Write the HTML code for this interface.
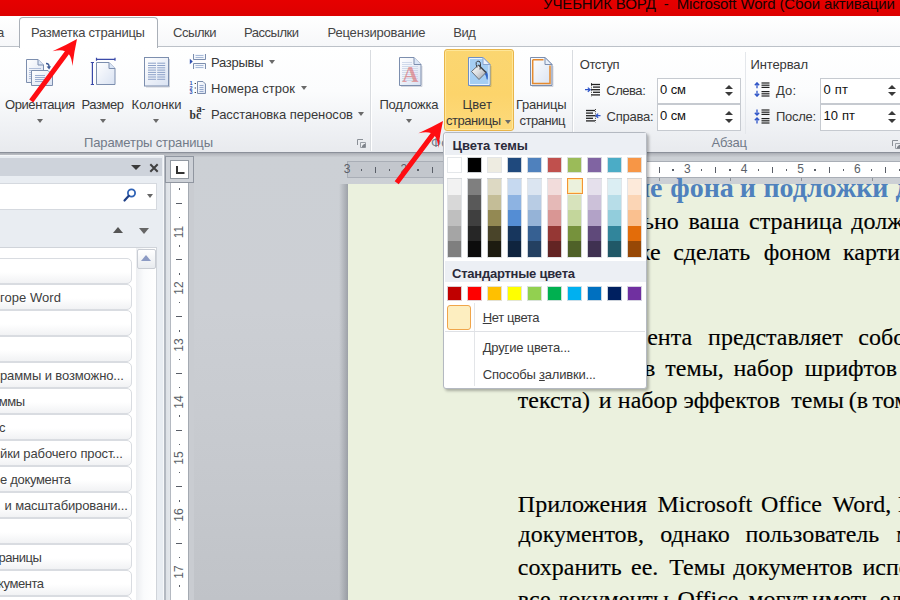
<!DOCTYPE html>
<html lang="ru"><head><meta charset="utf-8"><title>УЧЕБНИК ВОРД - Microsoft Word</title>
<style>
*{box-sizing:border-box;margin:0;padding:0}
html,body{width:900px;height:600px;overflow:hidden;background:#c7cbd0}
body{position:relative;font-family:"Liberation Sans",sans-serif;font-size:13px;color:#2b2b2b}
#app{position:absolute;left:0;top:0;width:900px;height:600px;overflow:hidden}
#app div,#app span,#app svg{position:absolute}
.t{white-space:nowrap}
#title{left:0;top:0;width:900px;height:16px;background:linear-gradient(#e60000,#dd0000)}
#tabs{left:0;top:16px;width:900px;height:31px;background:linear-gradient(#ffffff,#f6f7f9)}
#acttab{left:19px;top:17px;width:139px;height:31px;border:1px solid #aab0b8;border-bottom:none;border-radius:4px 4px 0 0;background:#fff}
#ribbon{left:0;top:46px;width:900px;height:107px;background:linear-gradient(#ffffff 0%,#fbfcfd 42%,#f0f2f5 74%,#e8eaee 100%);border-top:1px solid #bcc1c8;border-bottom:1px solid #8b909a}
.sep{top:50px;width:2px;height:101px;background:linear-gradient(90deg,#d9dce0 50%,#ffffff 50%)}
.dd{width:0;height:0;border-left:3.5px solid transparent;border-right:3.5px solid transparent;border-top:4px solid #6a6a6a}
.inp{background:#fff;border:1px solid #c6cad0}
#ws{left:0;top:153px;width:900px;height:447px;background:linear-gradient(#a9adb4 0,#bcbfc5 2px,#ccd0d5 4.5px,#cccfd4 35%,#c6c9ce 70%,#c0c3c8 100%)}
</style></head><body><div id="app">
<div id="title"></div><span class="t" style="top:-6.5px;font-size:15px;line-height:19px;height:19px;color:#160303;left:543.0px;letter-spacing:-0.13px;">УЧЕБНИК ВОРД&nbsp; -&nbsp; Microsoft Word (Сбой активации</span><div id="tabs"></div><div id="ribbon"></div><div id="acttab"></div><span class="t" style="top:24.5px;font-size:13px;line-height:16px;height:16px;color:#454545;left:-3.0px;letter-spacing:-0.23px;">а</span><span class="t" style="top:24.5px;font-size:13px;line-height:16px;height:16px;color:#454545;left:31.0px;letter-spacing:-0.25px;">Разметка страницы</span><span class="t" style="top:24.5px;font-size:13px;line-height:16px;height:16px;color:#454545;left:173.0px;letter-spacing:-0.45px;">Ссылки</span><span class="t" style="top:24.5px;font-size:13px;line-height:16px;height:16px;color:#454545;left:243.9px;letter-spacing:-0.45px;">Рассылки</span><span class="t" style="top:24.5px;font-size:13px;line-height:16px;height:16px;color:#454545;left:327.5px;letter-spacing:-0.18px;">Рецензирование</span><span class="t" style="top:24.5px;font-size:13px;line-height:16px;height:16px;color:#454545;left:453.2px;letter-spacing:-0.45px;">Вид</span><div class="sep" style="left:370px"></div><div class="sep" style="left:571.5px"></div><span class="t" style="top:97.0px;font-size:13px;line-height:16px;height:16px;color:#383838;left:5.0px;letter-spacing:-0.42px;">Ориентация</span><span class="t" style="top:97.0px;font-size:13px;line-height:16px;height:16px;color:#383838;left:81.5px;letter-spacing:-0.44px;">Размер</span><span class="t" style="top:97.0px;font-size:13px;line-height:16px;height:16px;color:#383838;left:131.5px;letter-spacing:0.07px;">Колонки</span><div class="dd" style="left:36.5px;top:119px"></div><div class="dd" style="left:99.5px;top:119px"></div><div class="dd" style="left:152.5px;top:119px"></div><span class="t" style="top:55.0px;font-size:13px;line-height:16px;height:16px;color:#383838;left:211.0px;letter-spacing:-0.27px;">Разрывы</span><span class="t" style="top:81.0px;font-size:13px;line-height:16px;height:16px;color:#383838;left:211.0px;letter-spacing:0.05px;">Номера строк</span><span class="t" style="top:107.0px;font-size:13px;line-height:16px;height:16px;color:#383838;left:211.0px;letter-spacing:-0.08px;">Расстановка переносов</span><div class="dd" style="left:268.5px;top:60px"></div><div class="dd" style="left:300.5px;top:86px"></div><div class="dd" style="left:357.5px;top:112px"></div><span class="t" style="top:97.0px;font-size:13px;line-height:16px;height:16px;color:#383838;left:379.5px;letter-spacing:-0.23px;">Подложка</span><div class="dd" style="left:405.5px;top:119px"></div><span class="t" style="top:135.0px;font-size:13px;line-height:16px;height:16px;color:#717a88;left:84.0px;letter-spacing:-0.12px;">Параметры страницы</span><span class="t" style="top:135.0px;font-size:13px;line-height:16px;height:16px;color:#717a88;left:431.1px;letter-spacing:0.25px;">Фон страницы</span><span class="t" style="top:135.0px;font-size:13px;line-height:16px;height:16px;color:#717a88;left:711.5px;letter-spacing:-0.24px;">Абзац</span><div style="left:444px;top:49px;width:70px;height:82px;border:1px solid #e8b54a;border-radius:3px;background:linear-gradient(#fbd671 0%,#fcd46b 55%,#fdda7c 100%);box-shadow:inset 0 0 0 1px rgba(255,236,170,.7)"></div><span class="t" style="top:97.0px;font-size:13px;line-height:16px;height:16px;color:#383838;left:462.5px;letter-spacing:0.12px;">Цвет</span><span class="t" style="top:113.0px;font-size:13px;line-height:16px;height:16px;color:#383838;left:446.0px;letter-spacing:-0.45px;">страницы</span><div class="dd" style="left:504.5px;top:120px"></div><span class="t" style="top:97.0px;font-size:13px;line-height:16px;height:16px;color:#383838;left:516.0px;letter-spacing:-0.25px;">Границы</span><span class="t" style="top:113.0px;font-size:13px;line-height:16px;height:16px;color:#383838;left:519.4px;letter-spacing:-0.45px;">страниц</span><span class="t" style="top:57.0px;font-size:13px;line-height:16px;height:16px;color:#383838;left:579.8px;letter-spacing:-0.45px;">Отступ</span><span class="t" style="top:83.0px;font-size:13px;line-height:16px;height:16px;color:#383838;left:606.2px;letter-spacing:-0.45px;">Слева:</span><span class="t" style="top:109.0px;font-size:13px;line-height:16px;height:16px;color:#383838;left:606.5px;letter-spacing:-0.25px;">Справа:</span><div class="inp" style="left:657px;top:77.5px;width:83.5px;height:26.5px"></div><div class="inp" style="left:657px;top:104px;width:83.5px;height:26.5px"></div><span class="t" style="top:82.0px;font-size:13px;line-height:16px;height:16px;color:#111;left:660.0px;letter-spacing:-0.09px;">0 см</span><span class="t" style="top:108.0px;font-size:13px;line-height:16px;height:16px;color:#111;left:660.0px;letter-spacing:-0.09px;">0 см</span><span class="t" style="top:57.0px;font-size:13px;line-height:16px;height:16px;color:#383838;left:750.5px;letter-spacing:-0.12px;">Интервал</span><span class="t" style="top:83.0px;font-size:13px;line-height:16px;height:16px;color:#383838;left:776.0px;letter-spacing:0.10px;">До:</span><span class="t" style="top:109.0px;font-size:13px;line-height:16px;height:16px;color:#383838;left:776.0px;letter-spacing:-0.30px;">После:</span><div class="inp" style="left:820px;top:77.5px;width:84px;height:26.5px"></div><div class="inp" style="left:820px;top:104px;width:84px;height:26.5px"></div><span class="t" style="top:82.0px;font-size:13px;line-height:16px;height:16px;color:#111;left:823.5px;letter-spacing:0.22px;">0 пт</span><span class="t" style="top:108.0px;font-size:13px;line-height:16px;height:16px;color:#111;left:823.5px;letter-spacing:0.11px;">10 пт</span><svg style="left:0px;top:0px" width="1" height="1" viewBox="0 0 1 1"><defs><linearGradient id="pg" x1="0" y1="0" x2="1" y2="1"><stop offset="0" stop-color="#ffffff"/><stop offset="1" stop-color="#d9e2f2"/></linearGradient><linearGradient id="bk" x1="0" y1="0" x2="1" y2="1"><stop offset="0" stop-color="#ffffff"/><stop offset=".5" stop-color="#d9dbde"/><stop offset="1" stop-color="#979ba1"/></linearGradient></defs></svg><svg style="left:24px;top:56px" width="32" height="32" viewBox="0 0 32 32"><path d="M2.5 3.5H14L19.5 9V26.5H2.5Z" fill="url(#pg)" stroke="#7c8eae"/><path d="M14 3.5V9H19.5" fill="#dbe6f7" stroke="#7c8eae"/><path d="M5 12.5H17M5 14.5H8M5 16.5H8M5 18.5H8M5 20.5H8M5 22.5H8" stroke="#a9b9d6" stroke-width=".9"/><path d="M7.5 14.5H24L28.5 19V29.5H7.5Z" fill="url(#pg)" stroke="#7c8eae"/><path d="M11 19.5H21M11 21.5H21M11 23.5H21M11 25.5H21" stroke="#91a5c9" stroke-width=".9"/><path d="M22 7.5Q25.5 7.5 25 11.5" fill="none" stroke="#3d5a94" stroke-width="1.4"/><path d="M22.6 10.6L25.2 13.6L27 10.2Z" fill="#3d5a94"/></svg><svg style="left:89px;top:56px" width="30" height="32" viewBox="0 0 30 32"><path d="M7.5 6.5H20L26 12.5V28.5H7.5Z" fill="url(#pg)" stroke="#7c8eae"/><path d="M20 6.5V12.5H26" fill="#dbe6f7" stroke="#7c8eae"/><path d="M3.4 6.5V28.5M1.8 6.5H5M1.8 28.5H5M7.5 3.3H26M7.5 1.8V4.8M26 1.8V4.8" fill="none" stroke="#3a49a8" stroke-width="1.2"/></svg><svg style="left:142px;top:55px" width="30" height="34" viewBox="0 0 30 34"><rect x="2.5" y="2.5" width="24" height="28.5" fill="url(#pg)" stroke="#7c8eae"/><path d="M27.5 4V32H4" fill="none" stroke="rgba(120,130,150,.35)"/><path d="M6 8.2H14M15.2 8.2H23.2" stroke="#8ca1c8" stroke-width="1"/><path d="M6 10.5H14M15.2 10.5H23.2" stroke="#8ca1c8" stroke-width="1"/><path d="M6 12.8H14M15.2 12.8H23.2" stroke="#8ca1c8" stroke-width="1"/><path d="M6 15.1H14M15.2 15.1H23.2" stroke="#8ca1c8" stroke-width="1"/><path d="M6 17.4H14M15.2 17.4H23.2" stroke="#8ca1c8" stroke-width="1"/><path d="M6 19.7H14M15.2 19.7H23.2" stroke="#8ca1c8" stroke-width="1"/><path d="M6 22.0H14M15.2 22.0H23.2" stroke="#8ca1c8" stroke-width="1"/><path d="M6 24.3H14M15.2 24.3H23.2" stroke="#8ca1c8" stroke-width="1"/></svg><svg style="left:188px;top:52px" width="20" height="20" viewBox="0 0 20 20"><path d="M5.5 2V7.5H17.5V2" fill="#f4f7fc" stroke="#7c8eae"/><path d="M7.5 3.5H15.5M7.5 5.5H15.5" stroke="#9fb2d4" stroke-width=".9"/><path d="M5.5 17V11.5H17.5V17" fill="#f4f7fc" stroke="#7c8eae"/><path d="M7.5 13.5H15.5M7.5 15.5H15.5" stroke="#9fb2d4" stroke-width=".9"/><path d="M1.8 6.8L4.8 9.5L1.8 12.2Z" fill="#2f4fb0"/></svg><svg style="left:188px;top:79px" width="20" height="18" viewBox="0 0 20 18"><path d="M9.5 2.5H15L17.5 5V14.5H9.5Z" fill="url(#pg)" stroke="#7c8eae"/><path d="M11.5 6.5H15.5M11.5 8.5H15.5M11.5 10.5H15.5M11.5 12.5H15.5" stroke="#8ca1c8" stroke-width=".9"/><path d="M7.3 4V5M7.3 8.5V9.5M7.3 13V14" stroke="#333" stroke-width="1.2"/><text x="1.5" y="6.2" font-family="Liberation Sans,sans-serif" font-size="5.5" font-weight="bold" fill="#2f4fb0">1</text><text x="1.5" y="10.8" font-family="Liberation Sans,sans-serif" font-size="5.5" font-weight="bold" fill="#2f4fb0">2</text><text x="1.5" y="15.4" font-family="Liberation Sans,sans-serif" font-size="5.5" font-weight="bold" fill="#2f4fb0">3</text></svg><span class="t" style="left:189.5px;top:109px;font:bold 11.5px/12px 'Liberation Serif',serif;color:#333">bc</span><span class="t" style="left:196.5px;top:103px;font:bold 10.5px/12px 'Liberation Serif',serif;color:#333">a-</span><svg style="left:397px;top:54px" width="28" height="36" viewBox="0 0 28 36"><path d="M2.5 3.5H17L24 10.5V31.5H2.5Z" fill="url(#pg)" stroke="#7c8eae"/><path d="M17 3.5V10.5H24" fill="#dbe6f7" stroke="#7c8eae"/><path d="M25 12V32.5H4" fill="none" stroke="rgba(120,130,150,.3)"/><path d="M5 8.5H15M5 10.5H15M5 12.5H21M5 14.5H21M5 16.5H21M5 18.5H21M5 20.5H21M5 22.5H21M5 24.5H21M5 26.5H21" stroke="#c7d2e6" stroke-width=".8"/><text x="13.3" y="27.5" text-anchor="middle" font-family="Liberation Serif,serif" font-size="23" font-weight="bold" fill="rgba(222,100,100,.58)">A</text></svg><svg style="left:466px;top:54px" width="28" height="36" viewBox="0 0 28 36"><path d="M2.5 3.5H17L24 10.5V31.5H2.5Z" fill="#a5cef3" stroke="#6d8fc4"/><path d="M3.5 4.5H16.6L23 10.9V30.5H3.5Z" fill="none" stroke="#e9f3fd"/><path d="M17 3.5V10.5H24Z" fill="#e9f0fb" stroke="#8aa3cc"/><path d="M25 12V32.5H4" fill="none" stroke="rgba(120,110,60,.3)"/><path d="M18.5 16.5Q22.5 17.5 21.8 24Q21.5 27 20.6 25Q20 20 17 18.5Z" fill="#2f63c4"/><path d="M5.5 17.5L12.5 11L20 18.5L13 25.5Z" fill="url(#bk)" stroke="#5d6269" stroke-width=".9"/><path d="M12.5 11L20 18.5" stroke="#43474d" stroke-width="1.4"/><path d="M11 13.5Q8.5 6.5 13 7.2Q15.5 8 14 15.5" fill="none" stroke="#3b3f45" stroke-width="1"/></svg><svg style="left:528px;top:54px" width="28" height="36" viewBox="0 0 28 36"><path d="M2.5 3.5H17L24 10.5V31.5H2.5Z" fill="url(#pg)" stroke="#7c8eae"/><path d="M25 12V32.5H4" fill="none" stroke="rgba(120,130,150,.3)"/><path d="M4.7 5.7H15.5M22 11.5V29.5H4.7V5.7" fill="none" stroke="#e58a2e" stroke-width="1.5"/><path d="M17 3.5V10.5H24Z" fill="#e9f0fb" stroke="#7c8eae"/></svg><div style="left:724.6px;top:84.5px;width:0;height:0;border-left:4px solid transparent;border-right:4px solid transparent;border-bottom:4.5px solid #3a3a3a"></div><div style="left:724.6px;top:92.0px;width:0;height:0;border-left:4px solid transparent;border-right:4px solid transparent;border-top:4.5px solid #3a3a3a"></div><div style="left:724.6px;top:111px;width:0;height:0;border-left:4px solid transparent;border-right:4px solid transparent;border-bottom:4.5px solid #3a3a3a"></div><div style="left:724.6px;top:118.5px;width:0;height:0;border-left:4px solid transparent;border-right:4px solid transparent;border-top:4.5px solid #3a3a3a"></div><div style="left:887.6px;top:84.5px;width:0;height:0;border-left:4px solid transparent;border-right:4px solid transparent;border-bottom:4.5px solid #3a3a3a"></div><div style="left:887.6px;top:92.0px;width:0;height:0;border-left:4px solid transparent;border-right:4px solid transparent;border-top:4.5px solid #3a3a3a"></div><div style="left:887.6px;top:111px;width:0;height:0;border-left:4px solid transparent;border-right:4px solid transparent;border-bottom:4.5px solid #3a3a3a"></div><div style="left:887.6px;top:118.5px;width:0;height:0;border-left:4px solid transparent;border-right:4px solid transparent;border-top:4.5px solid #3a3a3a"></div><svg style="left:585px;top:83px" width="16" height="14" viewBox="0 0 16 14"><path d="M6 1.5H15" stroke="#222" stroke-width="1.3"/><path d="M8 4.1H15" stroke="#222" stroke-width="1.3"/><path d="M6 6.7H15" stroke="#222" stroke-width="1.3"/><path d="M8 9.3H15" stroke="#222" stroke-width="1.3"/><path d="M6 11.9H15" stroke="#222" stroke-width="1.3"/><path d="M0 6.7H4.5M2.8 4.6L5.2 6.7L2.8 8.8" fill="none" stroke="#2f55c8" stroke-width="1.2"/><path d="M6.5 0V13.5" stroke="#444" stroke-width="1" stroke-dasharray="1 1.2"/></svg><svg style="left:585px;top:109px" width="16" height="14" viewBox="0 0 16 14"><path d="M1 1.5H10" stroke="#222" stroke-width="1.3"/><path d="M1 4.1H8" stroke="#222" stroke-width="1.3"/><path d="M1 6.7H10" stroke="#222" stroke-width="1.3"/><path d="M1 9.3H8" stroke="#222" stroke-width="1.3"/><path d="M1 11.9H10" stroke="#222" stroke-width="1.3"/><path d="M15.5 6.7H11.5M13.2 4.6L10.8 6.7L13.2 8.8" fill="none" stroke="#2f55c8" stroke-width="1.2"/><path d="M10.5 0V13.5" stroke="#444" stroke-width="1" stroke-dasharray="1 1.2"/></svg><svg style="left:753.5px;top:82px" width="16" height="15" viewBox="0 0 16 15"><path d="M7.5 1H15.5" stroke="#222" stroke-width="1.2"/><path d="M7.5 3.2H15.5" stroke="#222" stroke-width="1.2"/><path d="M7.5 5.4H15.5" stroke="#222" stroke-width="1.2"/><path d="M7.5 9.6H15.5" stroke="#222" stroke-width="1.2"/><path d="M7.5 11.8H15.5" stroke="#222" stroke-width="1.2"/><path d="M7.5 14H15.5" stroke="#222" stroke-width="1.2"/><path d="M3 1V6.2M0.8 3.2L3 0.8L5.2 3.2M3 8.8V14M0.8 11.8L3 14.2L5.2 11.8" fill="none" stroke="#2f55c8" stroke-width="1.3"/></svg><svg style="left:753.5px;top:108.5px" width="16" height="15" viewBox="0 0 16 15"><path d="M7.5 1H15.5" stroke="#222" stroke-width="1.2"/><path d="M7.5 3.2H15.5" stroke="#222" stroke-width="1.2"/><path d="M7.5 5.4H15.5" stroke="#222" stroke-width="1.2"/><path d="M7.5 9.6H15.5" stroke="#222" stroke-width="1.2"/><path d="M7.5 11.8H15.5" stroke="#222" stroke-width="1.2"/><path d="M7.5 14H15.5" stroke="#222" stroke-width="1.2"/><path d="M3 0.5V5.7M0.8 3.7L3 6.1L5.2 3.7M3 9.3V14.5M0.8 11.3L3 8.9L5.2 11.3" fill="none" stroke="#2f55c8" stroke-width="1.3"/></svg><div style="left:744.5px;top:52px;width:1px;height:82px;background:#e4e7eb"></div><svg style="left:356.5px;top:138.5px" width="9" height="9" viewBox="0 0 9 9"><path d="M0.5 6V0.5H6" fill="none" stroke="#8b9097" stroke-width="1"/><path d="M3.5 3.5H8.5V8.5H3.5Z" fill="none" stroke="#9a9fa6" stroke-width="1"/><path d="M8.5 8.5H5V7L7 5H8.5Z" fill="#7d8289"/></svg><svg style="left:892px;top:139.5px" width="9" height="9" viewBox="0 0 9 9"><path d="M0.5 6V0.5H6" fill="none" stroke="#8b9097" stroke-width="1"/><path d="M3.5 3.5H8.5V8.5H3.5Z" fill="none" stroke="#9a9fa6" stroke-width="1"/><path d="M8.5 8.5H5V7L7 5H8.5Z" fill="#7d8289"/></svg><div id="ws"></div><div style="left:0;top:155px;width:164px;height:445px;background:#e9edf2;border-top:1px solid #f4f6f8;border-right:1px solid #f7f8fa"></div><div style="left:164px;top:155px;width:2px;height:445px;background:#b4b9c1"></div><div style="left:0;top:158px;width:162px;height:18px;background:#ced3db"></div><div style="left:130.5px;top:165px;border-left:5px solid transparent;border-right:5px solid transparent;border-top:5px solid #3a3a3a;width:0;height:0"></div><svg style="left:148.5px;top:162.5px" width="10" height="10" viewBox="0 0 10 10"><path d="M1.3 1.3L8.7 8.7M8.7 1.3L1.3 8.7" stroke="#404040" stroke-width="2" fill="none"/></svg><div style="left:-2px;top:183px;width:159px;height:27px;background:#fff;border:1px solid #d5d9df"></div><svg style="left:122px;top:187px" width="16" height="16" viewBox="0 0 16 16"><circle cx="9.5" cy="6" r="3.6" fill="#fff" stroke="#2f62b5" stroke-width="1.8"/><path d="M6.8 8.8L2.5 13.5" stroke="#1f3f86" stroke-width="2.2" stroke-linecap="round"/></svg><div class="dd" style="left:146.5px;top:194px;border-top-color:#666"></div><div style="left:112.5px;top:227px;border-left:5px solid transparent;border-right:5px solid transparent;border-bottom:6px solid #555;width:0;height:0"></div><div style="left:138.5px;top:228px;border-left:5px solid transparent;border-right:5px solid transparent;border-top:6px solid #666;width:0;height:0"></div><div style="left:-2px;top:247px;width:159px;height:360px;background:#fff;border:1px solid #d0d4da"></div><div style="left:136px;top:248px;width:20px;height:352px;background:linear-gradient(90deg,#eceef1,#fafbfc 40%,#ffffff)"></div><div style="left:136.5px;top:248.5px;width:19px;height:20px;border:1px solid #c9cdd4;border-radius:2px;background:linear-gradient(#ffffff,#e8ebef)"></div><div style="left:140.5px;top:254.5px;border-left:5.5px solid transparent;border-right:5.5px solid transparent;border-bottom:6px solid #8c9bc4;width:0;height:0"></div><div style="left:-6px;top:257.7px;width:138px;height:26px;border:1px solid #d9dce1;border-radius:5px;background:linear-gradient(#ffffff 55%,#f1f2f4)"></div><div style="left:-6px;top:283.7px;width:138px;height:26px;border:1px solid #d9dce1;border-radius:5px;background:linear-gradient(#ffffff 55%,#f1f2f4)"></div><span class="t" style="top:290.3px;font-size:13px;line-height:16px;height:16px;color:#404040;left:0.0px;letter-spacing:0.05px;">горе Word</span><div style="left:-6px;top:309.7px;width:138px;height:26px;border:1px solid #d9dce1;border-radius:5px;background:linear-gradient(#ffffff 55%,#f1f2f4)"></div><div style="left:-6px;top:335.7px;width:138px;height:26px;border:1px solid #d9dce1;border-radius:5px;background:linear-gradient(#ffffff 55%,#f1f2f4)"></div><div style="left:-6px;top:361.7px;width:138px;height:26px;border:1px solid #d9dce1;border-radius:5px;background:linear-gradient(#ffffff 55%,#f1f2f4)"></div><span class="t" style="top:368.3px;font-size:13px;line-height:16px;height:16px;color:#404040;left:0.0px;letter-spacing:-0.11px;">раммы и возможно...</span><div style="left:-6px;top:387.7px;width:138px;height:26px;border:1px solid #d9dce1;border-radius:5px;background:linear-gradient(#ffffff 55%,#f1f2f4)"></div><span class="t" style="top:394.3px;font-size:13px;line-height:16px;height:16px;color:#404040;left:-1.3px;letter-spacing:-0.45px;">ммы</span><div style="left:-6px;top:413.7px;width:138px;height:26px;border:1px solid #d9dce1;border-radius:5px;background:linear-gradient(#ffffff 55%,#f1f2f4)"></div><span class="t" style="top:420.3px;font-size:13px;line-height:16px;height:16px;color:#404040;left:-1.0px;letter-spacing:-0.45px;">с</span><div style="left:-6px;top:439.7px;width:138px;height:26px;border:1px solid #d9dce1;border-radius:5px;background:linear-gradient(#ffffff 55%,#f1f2f4)"></div><span class="t" style="top:446.3px;font-size:13px;line-height:16px;height:16px;color:#404040;left:0.0px;letter-spacing:-0.12px;">йки рабочего прост...</span><div style="left:-6px;top:465.7px;width:138px;height:26px;border:1px solid #d9dce1;border-radius:5px;background:linear-gradient(#ffffff 55%,#f1f2f4)"></div><span class="t" style="top:472.3px;font-size:13px;line-height:16px;height:16px;color:#404040;left:0.0px;letter-spacing:-0.32px;">е документа</span><div style="left:-6px;top:491.7px;width:138px;height:26px;border:1px solid #d9dce1;border-radius:5px;background:linear-gradient(#ffffff 55%,#f1f2f4)"></div><span class="t" style="top:498.3px;font-size:13px;line-height:16px;height:16px;color:#404040;left:4.5px;letter-spacing:-0.11px;">и масштабировани...</span><div style="left:-6px;top:517.7px;width:138px;height:26px;border:1px solid #d9dce1;border-radius:5px;background:linear-gradient(#ffffff 55%,#f1f2f4)"></div><div style="left:-6px;top:543.7px;width:138px;height:26px;border:1px solid #d9dce1;border-radius:5px;background:linear-gradient(#ffffff 55%,#f1f2f4)"></div><span class="t" style="top:550.3px;font-size:13px;line-height:16px;height:16px;color:#404040;left:-1.5px;letter-spacing:-0.45px;">раницы</span><div style="left:-6px;top:569.7px;width:138px;height:26px;border:1px solid #d9dce1;border-radius:5px;background:linear-gradient(#ffffff 55%,#f1f2f4)"></div><span class="t" style="top:576.3px;font-size:13px;line-height:16px;height:16px;color:#404040;left:-1.9px;letter-spacing:-0.45px;">кумента</span><div style="left:-6px;top:595.7px;width:138px;height:26px;border:1px solid #d9dce1;border-radius:5px;background:linear-gradient(#ffffff 55%,#f1f2f4)"></div><div style="left:166px;top:183px;width:28px;height:420px;background:linear-gradient(90deg,#dde1e6 0,#e4e7eb 4px,#b4b9c1 4px,#b4b9c1 5px,#ffffff 5px,#ffffff 22.5px,#a4aab2 22.5px,#a4aab2 23.5px,#c9ccd1 23.5px)"></div><div style="left:165px;top:156px;width:29px;height:27px;border:1px solid #9096a0;background:#cdd1d7"></div><div style="left:170px;top:160px;width:19px;height:19px;border:1px solid #9299a2;background:#fff"></div><svg style="left:175.5px;top:166px" width="10" height="10" viewBox="0 0 10 10"><path d="M1 0V7H8.5" stroke="#333" stroke-width="2" fill="none"/></svg><div style="left:178.5px;top:188.4px;width:1.6px;height:1.6px;background:#5a5f68"></div><div style="left:176px;top:202.7px;width:6px;height:1px;background:#5a5f68"></div><div style="left:178.5px;top:216.7px;width:1.6px;height:1.6px;background:#5a5f68"></div><span class="t" style="left:171px;top:223.6px;width:16px;height:16px;line-height:16px;font-size:12px;color:#5a5f68;transform:rotate(-90deg);text-align:center">11</span><div style="left:178.5px;top:245.1px;width:1.6px;height:1.6px;background:#5a5f68"></div><div style="left:176px;top:259.4px;width:6px;height:1px;background:#5a5f68"></div><div style="left:178.5px;top:273.4px;width:1.6px;height:1.6px;background:#5a5f68"></div><span class="t" style="left:171px;top:280.3px;width:16px;height:16px;line-height:16px;font-size:12px;color:#5a5f68;transform:rotate(-90deg);text-align:center">12</span><div style="left:178.5px;top:301.8px;width:1.6px;height:1.6px;background:#5a5f68"></div><div style="left:176px;top:316.2px;width:6px;height:1px;background:#5a5f68"></div><div style="left:178.5px;top:330.1px;width:1.6px;height:1.6px;background:#5a5f68"></div><span class="t" style="left:171px;top:337.0px;width:16px;height:16px;line-height:16px;font-size:12px;color:#5a5f68;transform:rotate(-90deg);text-align:center">13</span><div style="left:178.5px;top:358.5px;width:1.6px;height:1.6px;background:#5a5f68"></div><div style="left:176px;top:372.9px;width:6px;height:1px;background:#5a5f68"></div><div style="left:178.5px;top:386.8px;width:1.6px;height:1.6px;background:#5a5f68"></div><span class="t" style="left:171px;top:393.7px;width:16px;height:16px;line-height:16px;font-size:12px;color:#5a5f68;transform:rotate(-90deg);text-align:center">14</span><div style="left:178.5px;top:415.2px;width:1.6px;height:1.6px;background:#5a5f68"></div><div style="left:176px;top:429.6px;width:6px;height:1px;background:#5a5f68"></div><div style="left:178.5px;top:443.5px;width:1.6px;height:1.6px;background:#5a5f68"></div><span class="t" style="left:171px;top:450.4px;width:16px;height:16px;line-height:16px;font-size:12px;color:#5a5f68;transform:rotate(-90deg);text-align:center">15</span><div style="left:178.5px;top:471.9px;width:1.6px;height:1.6px;background:#5a5f68"></div><div style="left:176px;top:486.2px;width:6px;height:1px;background:#5a5f68"></div><div style="left:178.5px;top:500.2px;width:1.6px;height:1.6px;background:#5a5f68"></div><span class="t" style="left:171px;top:507.1px;width:16px;height:16px;line-height:16px;font-size:12px;color:#5a5f68;transform:rotate(-90deg);text-align:center">16</span><div style="left:178.5px;top:528.6px;width:1.6px;height:1.6px;background:#5a5f68"></div><div style="left:176px;top:543.0px;width:6px;height:1px;background:#5a5f68"></div><div style="left:178.5px;top:556.9px;width:1.6px;height:1.6px;background:#5a5f68"></div><span class="t" style="left:171px;top:563.8px;width:16px;height:16px;line-height:16px;font-size:12px;color:#5a5f68;transform:rotate(-90deg);text-align:center">17</span><div style="left:178.5px;top:585.3px;width:1.6px;height:1.6px;background:#5a5f68"></div><div style="left:347px;top:161px;width:560px;height:17px;background:linear-gradient(90deg,#c3c7cd 0,#c3c7cd 170px,#ffffff 170px);border:1px solid #a9aeb6"></div><span class="t" style="left:339.1px;top:161px;width:16px;text-align:center;font-size:12px;line-height:17px;height:17px;color:#5a5f68">3</span><div style="left:360.6px;top:169px;width:1.6px;height:1.6px;background:#5a5f68"></div><div style="left:375.0px;top:166.5px;width:1px;height:6px;background:#5a5f68"></div><div style="left:388.9px;top:169px;width:1.6px;height:1.6px;background:#5a5f68"></div><span class="t" style="left:395.8px;top:161px;width:16px;text-align:center;font-size:12px;line-height:17px;height:17px;color:#5a5f68">2</span><div style="left:417.3px;top:169px;width:1.6px;height:1.6px;background:#5a5f68"></div><div style="left:431.7px;top:166.5px;width:1px;height:6px;background:#5a5f68"></div><div style="left:445.6px;top:169px;width:1.6px;height:1.6px;background:#5a5f68"></div><span class="t" style="left:452.5px;top:161px;width:16px;text-align:center;font-size:12px;line-height:17px;height:17px;color:#5a5f68">1</span><div style="left:474.0px;top:169px;width:1.6px;height:1.6px;background:#5a5f68"></div><div style="left:488.4px;top:166.5px;width:1px;height:6px;background:#5a5f68"></div><div style="left:502.3px;top:169px;width:1.6px;height:1.6px;background:#5a5f68"></div><div style="left:530.7px;top:169px;width:1.6px;height:1.6px;background:#5a5f68"></div><div style="left:545.1px;top:166.5px;width:1px;height:6px;background:#5a5f68"></div><div style="left:559.0px;top:169px;width:1.6px;height:1.6px;background:#5a5f68"></div><span class="t" style="left:565.9px;top:161px;width:16px;text-align:center;font-size:12px;line-height:17px;height:17px;color:#5a5f68">1</span><div style="left:587.4px;top:169px;width:1.6px;height:1.6px;background:#5a5f68"></div><div style="left:601.8px;top:166.5px;width:1px;height:6px;background:#5a5f68"></div><div style="left:615.7px;top:169px;width:1.6px;height:1.6px;background:#5a5f68"></div><span class="t" style="left:622.6px;top:161px;width:16px;text-align:center;font-size:12px;line-height:17px;height:17px;color:#5a5f68">2</span><div style="left:644.1px;top:169px;width:1.6px;height:1.6px;background:#5a5f68"></div><div style="left:658.5px;top:166.5px;width:1px;height:6px;background:#5a5f68"></div><div style="left:672.4px;top:169px;width:1.6px;height:1.6px;background:#5a5f68"></div><span class="t" style="left:679.3px;top:161px;width:16px;text-align:center;font-size:12px;line-height:17px;height:17px;color:#5a5f68">3</span><div style="left:700.8px;top:169px;width:1.6px;height:1.6px;background:#5a5f68"></div><div style="left:715.2px;top:166.5px;width:1px;height:6px;background:#5a5f68"></div><div style="left:729.1px;top:169px;width:1.6px;height:1.6px;background:#5a5f68"></div><span class="t" style="left:736.0px;top:161px;width:16px;text-align:center;font-size:12px;line-height:17px;height:17px;color:#5a5f68">4</span><div style="left:757.5px;top:169px;width:1.6px;height:1.6px;background:#5a5f68"></div><div style="left:771.9px;top:166.5px;width:1px;height:6px;background:#5a5f68"></div><div style="left:785.8px;top:169px;width:1.6px;height:1.6px;background:#5a5f68"></div><span class="t" style="left:792.7px;top:161px;width:16px;text-align:center;font-size:12px;line-height:17px;height:17px;color:#5a5f68">5</span><div style="left:814.2px;top:169px;width:1.6px;height:1.6px;background:#5a5f68"></div><div style="left:828.6px;top:166.5px;width:1px;height:6px;background:#5a5f68"></div><div style="left:842.5px;top:169px;width:1.6px;height:1.6px;background:#5a5f68"></div><span class="t" style="left:849.4px;top:161px;width:16px;text-align:center;font-size:12px;line-height:17px;height:17px;color:#5a5f68">6</span><div style="left:870.9px;top:169px;width:1.6px;height:1.6px;background:#5a5f68"></div><div style="left:885.3px;top:166.5px;width:1px;height:6px;background:#5a5f68"></div><div style="left:899.2px;top:169px;width:1.6px;height:1.6px;background:#5a5f68"></div><span class="t" style="left:906.1px;top:161px;width:16px;text-align:center;font-size:12px;line-height:17px;height:17px;color:#5a5f68">7</span><div style="left:927.6px;top:169px;width:1.6px;height:1.6px;background:#5a5f68"></div><div style="left:942.0px;top:166.5px;width:1px;height:6px;background:#5a5f68"></div><div style="left:955.9px;top:169px;width:1.6px;height:1.6px;background:#5a5f68"></div><div style="left:517.2px;top:178px;width:1px;height:3px;background:#8d939b"></div><div style="left:588.1px;top:178px;width:1px;height:3px;background:#8d939b"></div><div style="left:659.0px;top:178px;width:1px;height:3px;background:#8d939b"></div><div style="left:729.8px;top:178px;width:1px;height:3px;background:#8d939b"></div><div style="left:800.7px;top:178px;width:1px;height:3px;background:#8d939b"></div><div style="left:871.6px;top:178px;width:1px;height:3px;background:#8d939b"></div><div style="left:942.5px;top:178px;width:1px;height:3px;background:#8d939b"></div><div style="left:1013.3px;top:178px;width:1px;height:3px;background:#8d939b"></div><div style="left:339px;top:184px;width:9px;height:420px;background:linear-gradient(90deg,rgba(120,125,133,0) 0,rgba(120,125,133,.55) 100%)"></div><div style="left:347.5px;top:184px;width:560px;height:420px;background:#ebf1de"></div><span class="t" style="top:169.8px;font-size:28px;line-height:36px;height:36px;color:#4f81bd;font-family:'Liberation Serif',serif;font-weight:bold;left:525.1px;white-space:pre"><span style="position:static;word-spacing:0.81px">Изменение </span><span style="position:static;word-spacing:-1.12px">фона </span><span style="position:static;word-spacing:0.56px">и </span><span style="position:static;word-spacing:-0.08px">подложки </span><span style="position:static;word-spacing:-0.08px">документа</span></span><span class="t" style="top:206.1px;font-size:24px;line-height:31px;height:31px;color:#000;font-family:'Liberation Serif',serif;-webkit-text-stroke:0.15px #000;left:558.8px;white-space:pre"><span style="position:static;word-spacing:3.69px">Изначально </span><span style="position:static;word-spacing:3.69px">ваша </span><span style="position:static;word-spacing:2.92px">страница </span><span style="position:static;word-spacing:2.92px">должна</span></span><span class="t" style="top:236.9px;font-size:24px;line-height:31px;height:31px;color:#000;font-family:'Liberation Serif',serif;-webkit-text-stroke:0.15px #000;left:514.8px;white-space:pre"><span style="position:static;word-spacing:6.38px">Можно </span><span style="position:static;word-spacing:6.38px">также </span><span style="position:static;word-spacing:7.53px">сделать </span><span style="position:static;word-spacing:6.17px">фоном </span><span style="position:static;word-spacing:6.17px">картинку</span></span><span class="t" style="top:322.1px;font-size:24px;line-height:31px;height:31px;color:#000;font-family:'Liberation Serif',serif;-webkit-text-stroke:0.15px #000;left:518.7px;white-space:pre"><span style="position:static;word-spacing:9.96px">Тема </span><span style="position:static;word-spacing:9.96px">документа </span><span style="position:static;word-spacing:9.64px">представляет </span><span style="position:static;word-spacing:9.64px">собой</span></span><span class="t" style="top:353.2px;font-size:24px;line-height:31px;height:31px;color:#000;font-family:'Liberation Serif',serif;-webkit-text-stroke:0.15px #000;left:517.4px;white-space:pre"><span style="position:static;word-spacing:4.00px">набор </span><span style="position:static;word-spacing:4.00px">цветов </span><span style="position:static;word-spacing:3.75px">темы, </span><span style="position:static;word-spacing:5.48px">набор </span><span style="position:static;word-spacing:5.48px">шрифтов темы</span></span><span class="t" style="top:384.6px;font-size:24px;line-height:31px;height:31px;color:#000;font-family:'Liberation Serif',serif;-webkit-text-stroke:0.15px #000;left:517.8px;white-space:pre"><span style="position:static;word-spacing:2.62px">текста) </span><span style="position:static;word-spacing:0.26px">и </span><span style="position:static;word-spacing:-0.02px">набор </span><span style="position:static;word-spacing:5.17px">эффектов </span><span style="position:static;word-spacing:-1.05px">темы </span><span style="position:static;word-spacing:-1.53px">(в </span><span style="position:static;word-spacing:-1.53px">том числе</span></span><span class="t" style="top:489.4px;font-size:24px;line-height:31px;height:31px;color:#000;font-family:'Liberation Serif',serif;-webkit-text-stroke:0.15px #000;left:517.8px;white-space:pre"><span style="position:static;word-spacing:4.40px">Приложения </span><span style="position:static;word-spacing:2.94px">Microsoft </span><span style="position:static;word-spacing:4.74px">Office </span><span style="position:static;word-spacing:0.67px">Word, </span><span style="position:static;word-spacing:0.67px">Excel</span></span><span class="t" style="top:519.4px;font-size:24px;line-height:31px;height:31px;color:#000;font-family:'Liberation Serif',serif;-webkit-text-stroke:0.15px #000;left:518.5px;white-space:pre"><span style="position:static;word-spacing:10.29px">документов, </span><span style="position:static;word-spacing:9.73px">однако </span><span style="position:static;word-spacing:10.99px">пользователь </span><span style="position:static;word-spacing:10.99px">может</span></span><span class="t" style="top:551.6px;font-size:24px;line-height:31px;height:31px;color:#000;font-family:'Liberation Serif',serif;-webkit-text-stroke:0.15px #000;left:517.8px;white-space:pre"><span style="position:static;word-spacing:3.37px">сохранить </span><span style="position:static;word-spacing:4.99px">ее. </span><span style="position:static;word-spacing:2.18px">Темы </span><span style="position:static;word-spacing:3.79px">документов </span><span style="position:static;word-spacing:3.79px">используются</span></span><span class="t" style="top:583.9px;font-size:24px;line-height:31px;height:31px;color:#000;font-family:'Liberation Serif',serif;-webkit-text-stroke:0.15px #000;left:517.8px;white-space:pre"><span style="position:static;word-spacing:-0.20px">все </span><span style="position:static;word-spacing:2.68px">документы </span><span style="position:static;word-spacing:3.74px">Office </span><span style="position:static;word-spacing:-1.73px">могут </span><span style="position:static;word-spacing:1.67px">иметь </span><span style="position:static;word-spacing:1.67px">единый</span></span><div style="left:443px;top:131.5px;width:203.5px;height:257px;background:#fff;border:1px solid #b4b9c1;border-radius:3px;box-shadow:2px 2px 3px rgba(0,0,0,.28)"></div><div style="left:444.5px;top:133px;width:201px;height:21.5px;background:#eceff4"></div><span class="t" style="top:138.0px;font-size:13px;line-height:16px;height:16px;color:#2a2a3a;font-weight:bold;left:452.5px;letter-spacing:-0.03px;">Цвета темы</span><div style="left:447px;top:157px;width:15px;height:15.5px;background:#ffffff;border:1px solid rgba(225,228,232,.9)"></div><div style="left:447px;top:177.5px;width:15px;height:80px;border:1px solid rgba(225,228,232,.9);background:linear-gradient(#f2f2f2 0%,#f2f2f2 20%,#d8d8d8 20%,#d8d8d8 40%,#bfbfbf 40%,#bfbfbf 60%,#a5a5a5 60%,#a5a5a5 80%,#7f7f7f 80%,#7f7f7f 100%)"></div><div style="left:467px;top:157px;width:15px;height:15.5px;background:#000000;border:1px solid rgba(225,228,232,.9)"></div><div style="left:467px;top:177.5px;width:15px;height:80px;border:1px solid rgba(225,228,232,.9);background:linear-gradient(#7f7f7f 0%,#7f7f7f 20%,#595959 20%,#595959 40%,#3f3f3f 40%,#3f3f3f 60%,#262626 60%,#262626 80%,#0c0c0c 80%,#0c0c0c 100%)"></div><div style="left:487px;top:157px;width:15px;height:15.5px;background:#eeece1;border:1px solid rgba(225,228,232,.9)"></div><div style="left:487px;top:177.5px;width:15px;height:80px;border:1px solid rgba(225,228,232,.9);background:linear-gradient(#ddd9c3 0%,#ddd9c3 20%,#c4bd97 20%,#c4bd97 40%,#938953 40%,#938953 60%,#494429 60%,#494429 80%,#1d1b10 80%,#1d1b10 100%)"></div><div style="left:507px;top:157px;width:15px;height:15.5px;background:#1f497d;border:1px solid rgba(225,228,232,.9)"></div><div style="left:507px;top:177.5px;width:15px;height:80px;border:1px solid rgba(225,228,232,.9);background:linear-gradient(#c6d9f0 0%,#c6d9f0 20%,#8db3e2 20%,#8db3e2 40%,#548dd4 40%,#548dd4 60%,#17365d 60%,#17365d 80%,#0f243e 80%,#0f243e 100%)"></div><div style="left:527px;top:157px;width:15px;height:15.5px;background:#4f81bd;border:1px solid rgba(225,228,232,.9)"></div><div style="left:527px;top:177.5px;width:15px;height:80px;border:1px solid rgba(225,228,232,.9);background:linear-gradient(#dbe5f1 0%,#dbe5f1 20%,#b8cce4 20%,#b8cce4 40%,#95b3d7 40%,#95b3d7 60%,#366092 60%,#366092 80%,#244061 80%,#244061 100%)"></div><div style="left:547px;top:157px;width:15px;height:15.5px;background:#c0504d;border:1px solid rgba(225,228,232,.9)"></div><div style="left:547px;top:177.5px;width:15px;height:80px;border:1px solid rgba(225,228,232,.9);background:linear-gradient(#f2dcdb 0%,#f2dcdb 20%,#e5b9b7 20%,#e5b9b7 40%,#d99694 40%,#d99694 60%,#953734 60%,#953734 80%,#632423 80%,#632423 100%)"></div><div style="left:567px;top:157px;width:15px;height:15.5px;background:#9bbb59;border:1px solid rgba(225,228,232,.9)"></div><div style="left:567px;top:177.5px;width:15px;height:80px;border:1px solid rgba(225,228,232,.9);background:linear-gradient(#ebf1dd 0%,#ebf1dd 20%,#d7e3bc 20%,#d7e3bc 40%,#c3d69b 40%,#c3d69b 60%,#76923c 60%,#76923c 80%,#4f6128 80%,#4f6128 100%)"></div><div style="left:587px;top:157px;width:15px;height:15.5px;background:#8064a2;border:1px solid rgba(225,228,232,.9)"></div><div style="left:587px;top:177.5px;width:15px;height:80px;border:1px solid rgba(225,228,232,.9);background:linear-gradient(#e5e0ec 0%,#e5e0ec 20%,#ccc1d9 20%,#ccc1d9 40%,#b2a2c7 40%,#b2a2c7 60%,#5f497a 60%,#5f497a 80%,#3f3151 80%,#3f3151 100%)"></div><div style="left:607px;top:157px;width:15px;height:15.5px;background:#4bacc6;border:1px solid rgba(225,228,232,.9)"></div><div style="left:607px;top:177.5px;width:15px;height:80px;border:1px solid rgba(225,228,232,.9);background:linear-gradient(#dbeef3 0%,#dbeef3 20%,#b7dde8 20%,#b7dde8 40%,#92cddc 40%,#92cddc 60%,#31859b 60%,#31859b 80%,#205867 80%,#205867 100%)"></div><div style="left:627px;top:157px;width:15px;height:15.5px;background:#f79646;border:1px solid rgba(225,228,232,.9)"></div><div style="left:627px;top:177.5px;width:15px;height:80px;border:1px solid rgba(225,228,232,.9);background:linear-gradient(#fdeada 0%,#fdeada 20%,#fbd5b5 20%,#fbd5b5 40%,#fac08f 40%,#fac08f 60%,#e36c09 60%,#e36c09 80%,#974806 80%,#974806 100%)"></div><div style="left:566.5px;top:177.5px;width:16px;height:16.5px;border:1.5px solid #f29536;background:#ebf1dd;box-shadow:inset 0 0 0 1px #ffe9a8"></div><div style="left:444.5px;top:261px;width:201px;height:21px;background:#eceff4"></div><span class="t" style="top:265.5px;font-size:13px;line-height:16px;height:16px;color:#2a2a3a;font-weight:bold;left:452.0px;letter-spacing:-0.23px;">Стандартные цвета</span><div style="left:447px;top:285.5px;width:15px;height:15px;background:#c00000;border:1px solid rgba(225,228,232,.9)"></div><div style="left:467px;top:285.5px;width:15px;height:15px;background:#ff0000;border:1px solid rgba(225,228,232,.9)"></div><div style="left:487px;top:285.5px;width:15px;height:15px;background:#ffc000;border:1px solid rgba(225,228,232,.9)"></div><div style="left:507px;top:285.5px;width:15px;height:15px;background:#ffff00;border:1px solid rgba(225,228,232,.9)"></div><div style="left:527px;top:285.5px;width:15px;height:15px;background:#92d050;border:1px solid rgba(225,228,232,.9)"></div><div style="left:547px;top:285.5px;width:15px;height:15px;background:#00b050;border:1px solid rgba(225,228,232,.9)"></div><div style="left:567px;top:285.5px;width:15px;height:15px;background:#00b0f0;border:1px solid rgba(225,228,232,.9)"></div><div style="left:587px;top:285.5px;width:15px;height:15px;background:#0070c0;border:1px solid rgba(225,228,232,.9)"></div><div style="left:607px;top:285.5px;width:15px;height:15px;background:#002060;border:1px solid rgba(225,228,232,.9)"></div><div style="left:627px;top:285.5px;width:15px;height:15px;background:#7030a0;border:1px solid rgba(225,228,232,.9)"></div><div style="left:474px;top:303px;width:1px;height:83px;background:#e3e5e8"></div><div style="left:445px;top:331px;width:200px;height:1px;background:#dfe1e5"></div><div style="left:446.5px;top:305px;width:24px;height:24.5px;border:1.5px solid #f0a54a;border-radius:3px;background:#fdeec0"></div><span class="t" style="top:310.0px;font-size:13px;line-height:16px;height:16px;color:#3a3a3a;left:482.7px;letter-spacing:-0.37px;"><u>Н</u>ет цвета</span><span class="t" style="top:340.0px;font-size:13px;line-height:16px;height:16px;color:#3a3a3a;left:482.7px;letter-spacing:-0.17px;">Дру<u>г</u>ие цвета...</span><span class="t" style="top:366.5px;font-size:13px;line-height:16px;height:16px;color:#3a3a3a;left:482.7px;letter-spacing:-0.20px;">Способы <u>з</u>аливки...</span><svg style="left:0;top:0" width="900" height="600" viewBox="0 0 900 600"><g fill="#ff0d12" stroke="none"><path d="M77.0 39.0 Q65.3 45.6 52.5 51.3 Q60.8 49.4 64.9 51.2 L29.2 99.5 L33.2 102.5 L68.9 54.2 Q71.8 57.5 72.4 66.1 Q74.1 52.1 77.0 39.0 Z"/><path d="M443.0 121.0 Q431.3 127.5 418.4 133.2 Q426.7 131.3 430.8 133.1 L394.7 181.2 L398.7 184.2 L434.8 136.1 Q437.7 139.5 438.2 148.0 Q440.0 134.1 443.0 121.0 Z"/></g></svg></div></body></html>
